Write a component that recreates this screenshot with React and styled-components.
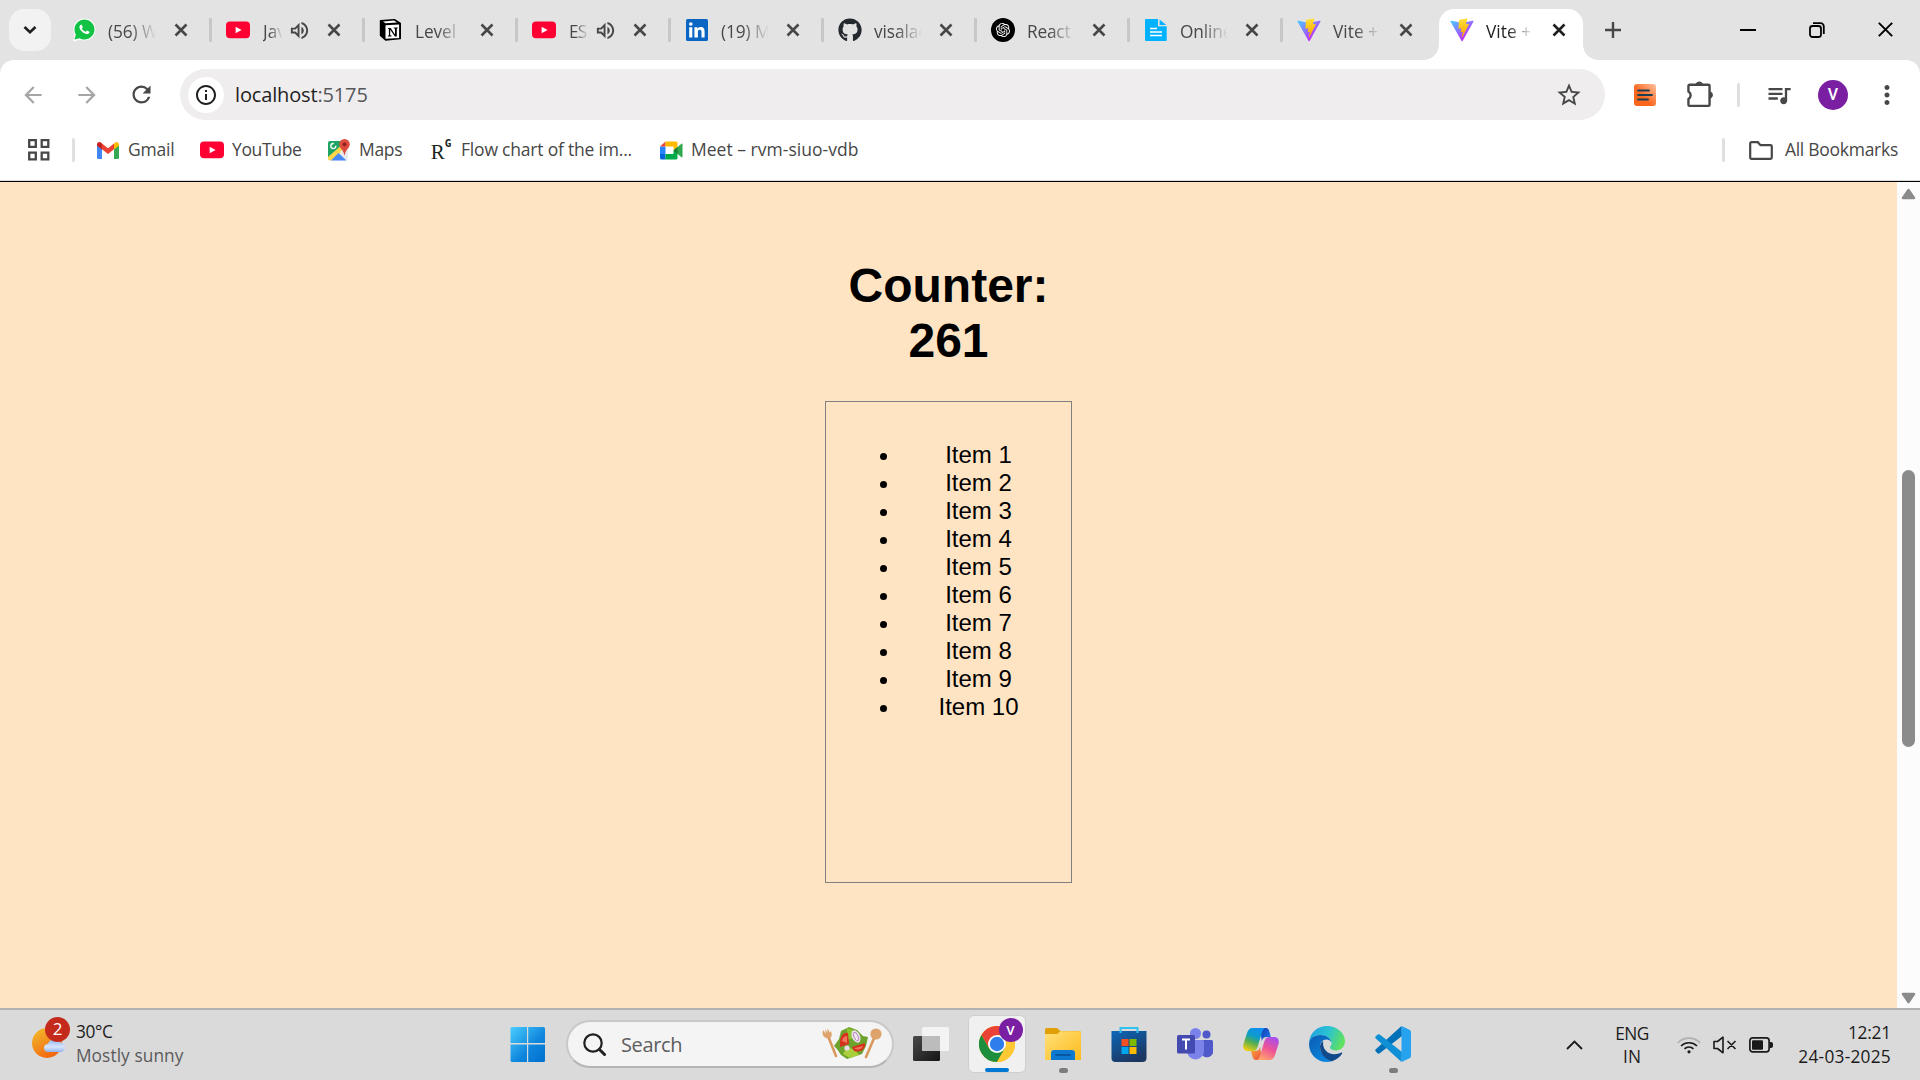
import React from "react";
import styled, { createGlobalStyle, css } from "styled-components";
import {
  MdArrowBack, MdArrowForward, MdRefresh, MdStarBorder, MdOutlineQueueMusic,
  MdOutlineVolumeUp, MdMoreVert, MdInfoOutline,
} from "react-icons/md";
import { FaGithub } from "react-icons/fa";
import { RiOpenaiFill, RiWhatsappFill } from "react-icons/ri";

const ui = `"Open Sans", "Noto Sans", sans-serif`;

const Global = createGlobalStyle`
  * { box-sizing: border-box; }
  html, body { margin: 0; padding: 0; overflow: hidden; }
  body { font-family: ${ui}; }
  svg { display: block; flex: none; }
`;

const Screen = styled.div`
  width: 1920px;
  height: 1080px;
  display: flex;
  flex-direction: column;
  overflow: hidden;
  background: #e3e3e3;
`;

/* ---------- tab strip ---------- */
const TabStrip = styled.div`
  height: 60px;
  display: flex;
  align-items: stretch;
  flex: none;
`;
const TabSearch = styled.div`
  width: 42px;
  height: 42px;
  margin: 9px 8px 0 9px;
  border-radius: 15px;
  background: #f2f2f2;
  display: grid;
  place-items: center;
`;
const tabCommon = css`
  display: flex;
  align-items: center;
  flex: none;
`;
const InactiveTab = styled.div`
  ${tabCommon}
  width: 153px;
  height: 60px;
  padding-left: 14px;
`;
const ActiveTab = styled.div`
  ${tabCommon}
  position: relative;
  width: 144px;
  height: 51px;
  margin: 9px 6px 0 3px;
  padding: 0 0 9px 11px;
  border-radius: 15px 15px 0 0;
  background: #fff;
  &::before, &::after {
    content: "";
    position: absolute;
    bottom: 0;
    width: 15px;
    height: 15px;
  }
  &::before { left: -15px; background: radial-gradient(circle at 0 0, transparent 14.5px, #fff 15px); }
  &::after { right: -15px; background: radial-gradient(circle at 100% 0, transparent 14.5px, #fff 15px); }
`;
const Favicon = styled.div`
  width: 24px;
  height: 24px;
  display: grid;
  place-items: center;
  flex: none;
`;
const TabTitle = styled.div`
  width: ${(p) => p.$w}px;
  margin-left: ${(p) => p.$ml || 12}px;
  padding-top: 3px;
  overflow: hidden;
  white-space: nowrap;
  font-size: 17.3px;
  line-height: 24px;
  letter-spacing: ${(p) => p.$ls || 0}px;
  color: ${(p) => (p.$active ? "#1f1f1f" : "#474747")};
  mask-image: linear-gradient(to right, #000 ${(p) => p.$w - (p.$w < 30 ? 14 : 26)}px, transparent ${(p) => p.$w}px);
`;
const Speaker = styled.div`
  width: 20px;
  margin-left: 6px;
  color: #474747;
`;
const TabClose = styled.div`
  width: 14px;
  margin-left: ${(p) => p.$ml}px;
`;
const TabDivider = styled.div`
  width: 3px;
  height: 24px;
  margin-left: 21px;
  background: #c7c7c7;
  border-radius: 1px;
`;
const NewTab = styled.div`
  width: 48px;
  height: 60px;
  display: grid;
  place-items: center;
`;
const WindowButtons = styled.div`
  margin-left: auto;
  display: flex;
`;
const WindowButton = styled.div`
  width: 69px;
  height: 59px;
  display: grid;
  place-items: center;
`;

/* ---------- toolbar ---------- */
const Chrome = styled.div`
  height: 122px;
  flex: none;
  background: #fff;
  border-radius: 14px 14px 0 0;
  border-bottom: 1px solid #000;
  box-shadow: inset 0 -1px 0 #dcdcdc;
`;
const Toolbar = styled.div`
  height: 60px;
  padding: 9px 6px 0;
  display: flex;
`;
const ToolCell = styled.div`
  width: 54px;
  height: 51px;
  display: grid;
  place-items: center;
  flex: none;
  color: ${(p) => p.$c || "#474747"};
`;
const Omnibox = styled.div`
  flex: 1;
  height: 51px;
  margin: 0 13px 0 12px;
  padding: 0 22px 0 8px;
  border-radius: 26px;
  background: #efedee;
  display: flex;
  align-items: center;
`;
const SiteInfo = styled.div`
  width: 36px;
  height: 36px;
  border-radius: 50%;
  background: #fff;
  display: grid;
  place-items: center;
`;
const Url = styled.div`
  flex: 1;
  margin-left: 11px;
  font-size: 20px;
  letter-spacing: ${(p) => p.$ls}px;
  line-height: 28px;
  color: #1f1f1f;
  span { color: #56575a; }
`;
const Rule = styled.div`
  width: 3px;
  height: 24px;
  border-radius: 2px;
  background: #e0e0e0;
  margin: ${(p) => p.$m || "0"};
`;
const Avatar = styled.div`
  width: ${(p) => p.$s}px;
  height: ${(p) => p.$s}px;
  border-radius: 50%;
  background: #7b1fa2;
  color: #fff;
  font: 500 ${(p) => p.$f}px Roboto, sans-serif;
  display: grid;
  place-items: center;
`;

/* ---------- bookmarks ---------- */
const Bookmarks = styled.div`
  height: 60px;
  padding: 0 22px 0 27px;
  display: flex;
  align-items: center;
`;
const Bookmark = styled.div`
  width: ${(p) => p.$w}px;
  display: flex;
  align-items: center;
  gap: 8px;
  white-space: nowrap;
`;
const Label = styled.span`
  padding-bottom: 2px;
  font-size: 17.5px;
  line-height: 24px;
  letter-spacing: ${(p) => p.$ls || 0}px;
  color: #474747;
`;
const AllBookmarks = styled.div`
  margin-left: auto;
  display: flex;
  align-items: center;
  gap: 12px;
  white-space: nowrap;
`;
const RLetter = styled.div`
  width: 24px;
  display: flex;
  justify-content: center;
  padding-top: 4px;
  font: 21px/24px "Liberation Serif", serif;
  color: #1b2623;
  span { font: 700 11px/12px "DejaVu Sans Mono", monospace; margin-top: -2px; }
`;

/* ---------- page ---------- */
const Viewport = styled.div`
  height: 826px;
  flex: none;
  display: flex;
`;
const Page = styled.div`
  flex: 1;
  background: #ffe4c4;
  display: flex;
  flex-direction: column;
  align-items: center;
  font-family: "Liberation Sans", Arial, sans-serif;
  color: #000;
`;
const Heading = styled.h1`
  width: 247px;
  margin: 76px 0 0;
  font-size: 48px;
  line-height: 55px;
  text-align: center;
`;
const ListBox = styled.div`
  width: 247px;
  height: 482px;
  margin-top: 33px;
  padding-top: 39px;
  border: 1px solid #808080;
`;
const Items = styled.ul`
  margin: 0;
  padding: 0 0 0 54px;
  list-style: none;
`;
const Item = styled.li`
  display: flex;
  align-items: center;
  height: 28px;
  font-size: 24px;
  line-height: 28px;
  &::before {
    content: "";
    width: 7px;
    height: 7px;
    margin-top: 2px;
    border-radius: 50%;
    background: #000;
  }
`;
const ItemText = styled.span`
  flex: 1;
  padding-right: 1px;
  text-align: center;
`;
const Scrollbar = styled.div`
  width: 23px;
  background: #fcfcfc;
  display: flex;
  flex-direction: column;
  align-items: center;
  padding: 6px 0 4px;
`;
const Thumb = styled.div`
  width: 13px;
  height: 277px;
  margin: 270px 0 auto;
  border-radius: 7px;
  background: #8b8b8b;
`;

/* ---------- taskbar ---------- */
const Taskbar = styled.div`
  height: 72px;
  flex: none;
  border-top: 2px solid #b2b2b2;
  background: #dadada;
  display: flex;
  align-items: stretch;
`;
const Weather = styled.div`
  width: 495px;
  padding-left: 30px;
  display: flex;
`;
const WeatherText = styled.div`
  margin-left: 6px;
  padding-top: 10px;
  font-size: 17.3px;
  line-height: 24px;
  color: #1c1c1c;
  white-space: nowrap;
`;
const Line = styled.div`
  letter-spacing: ${(p) => p.$ls || 0}px;
  color: ${(p) => p.$c || "inherit"};
`;
const TaskCell = styled.div`
  width: 66px;
  display: flex;
  flex-direction: column;
  align-items: center;
  flex: none;
  padding-top: ${(p) => p.$pt || 16}px;
`;
const RunDot = styled.div`
  width: 9px;
  height: 5px;
  margin-top: 6px;
  border-radius: 3px;
  background: #7c7c7c;
`;
const ActiveTile = styled.div`
  position: relative;
  width: 58px;
  height: 58px;
  margin-left: -1px;
  padding-top: 10px;
  border-radius: 6px;
  border: 1px solid #cfcfcf;
  background: #f0f0f0;
  display: flex;
  flex-direction: column;
  align-items: center;
`;
const ActiveBar = styled.div`
  width: 24px;
  height: 5px;
  margin-top: 6px;
  border-radius: 3px;
  background: #0078d4;
`;
const TileBadge = styled.div`
  position: absolute;
  right: 2px;
  top: 2px;
`;
const SearchPill = styled.div`
  width: 328px;
  height: 48px;
  margin: 10px 4px 0 5px;
  padding: 0 9px 0 15px;
  border: 2px solid #c9c9c9;
  border-bottom-color: #b5b5b5;
  border-radius: 24px;
  background: #f4f4f4;
  display: flex;
  align-items: center;
`;
const SearchText = styled.div`
  flex: 1;
  margin-left: 15px;
  font-size: 20px;
  letter-spacing: -0.35px;
  color: #5d5d5d;
`;
const Tray = styled.div`
  margin-left: auto;
  padding-right: 29px;
  display: flex;
  align-items: center;
  color: #1a1a1a;
`;
const TrayIcon = styled.div`
  width: 24px;
  margin-right: ${(p) => p.$mr ?? 12}px;
`;
const TrayText = styled.div`
  width: ${(p) => p.$w}px;
  margin-right: ${(p) => p.$mr || 0}px;
  font-size: 17.3px;
  line-height: ${(p) => p.$lh || 24}px;
  text-align: ${(p) => p.$align};
  white-space: nowrap;
`;

/* ---------- icons ---------- */
const Cross = ({ c = "#474747", s = 14, w = 2.6 }) => (
  <svg width={s} height={s} viewBox="0 0 14 14"><path d="M1.5 1.5l11 11M12.5 1.5l-11 11" stroke={c} strokeWidth={w} fill="none" /></svg>
);
const YouTube = () => (
  <svg width="24" height="18" viewBox="0 0 24 18"><rect y=".6" width="24" height="16.6" rx="4" fill="#ff0033" /><path d="M9.6 5.7v6.6L15.6 9z" fill="#fff" /></svg>
);
const WhatsApp = () => (
  <svg width="24" height="24" viewBox="0 0 24 24">
    <circle cx="11.500" cy="11.500" r="11" fill="#fff" /><path d="M0 23.500l2-8 6 6z" fill="#fff" />
    <RiWhatsappFill x="-.5" y="-.5" size={24} color="#12c245" />
  </svg>
);
const Notion = () => (
  <svg width="24" height="24" viewBox="0 0 24 24">
    <path d="M1.5 2.8L15.5 1.6 21.3 5.3V20.6L6.6 22 1.5 17.5z" fill="#000" stroke="#000" strokeWidth="1.4" strokeLinejoin="round" />
    <path d="M4 3.5L15 2.6 18 4.6 6.5 5.3z" fill="#fff" /><path d="M6.5 7.2L20.1 6.4V19.9L6.5 20.8z" fill="#fff" />
    <path d="M9 10h2.7l4.3 6.4v-5.7l-1.2-.4V9.6l4-.2v.8l-1 .4v7.8l-1.9.2-4.7-6.9v5.5l1.3.4v.8l-3.6.2v-.9l1-.4V10.9L9 10.7z" fill="#000" />
  </svg>
);
const LinkedIn = () => (
  <svg width="22" height="22" viewBox="0 0 22 22"><rect width="22" height="22" rx="1.5" fill="#0a66c2" /><path d="M3.2 8.3h3.1v10.2H3.2zM8.4 8.3h3v1.4c.5-.9 1.6-1.7 3.2-1.7 3.3 0 4 2.1 4 4.9v5.6h-3.1v-5c0-1.2 0-2.7-1.7-2.7s-1.9 1.3-1.9 2.6v5.1H8.4z" fill="#fff" /><circle cx="4.8" cy="5" r="1.8" fill="#fff" /></svg>
);
const OpenAI = () => (
  <svg width="24" height="24" viewBox="0 0 24 24"><circle cx="12" cy="12" r="12" fill="#000" /><RiOpenaiFill x="3.500" y="3.500" size={17} color="#fff" /></svg>
);
const Doc = () => (
  <svg width="22" height="22" viewBox="0 0 22 22"><path d="M1 0h12v7.3h8.7V21a1 1 0 0 1-1 1H1a1 1 0 0 1-1-1V1a1 1 0 0 1 1-1z" fill="#00b2ff" /><path d="M14.6.5l6.6 5.4h-6.6z" fill="#00b2ff" /><path d="M5 9.5h7M5 13h12M5 16.5h12" stroke="#fff" strokeWidth="1.6" /></svg>
);
const Vite = () => (
  <svg width="24" height="24" viewBox="0 0 410 404">
    <defs>
      <linearGradient id="va" x1="6" y1="33" x2="235" y2="344" gradientUnits="userSpaceOnUse"><stop stopColor="#41D1FF" /><stop offset="1" stopColor="#BD34FE" /></linearGradient>
      <linearGradient id="vb" x1="194.651" y1="8.818" x2="236.076" y2="292.989" gradientUnits="userSpaceOnUse"><stop stopColor="#FFEA83" /><stop offset=".083" stopColor="#FFDD35" /><stop offset="1" stopColor="#FFA800" /></linearGradient>
    </defs>
    <path d="M399.641 59.5246L215.643 388.545C211.844 395.338 202.084 395.378 198.228 388.618L10.5817 59.5563C6.38087 52.1896 12.6802 43.2665 21.0281 44.7586L205.223 77.6824C206.398 77.8924 207.601 77.8904 208.776 77.6763L389.119 44.8058C397.439 43.2894 403.768 52.1434 399.641 59.5246Z" fill="url(#va)" />
    <path d="M292.965 1.5744L156.801 28.2552C154.563 28.6937 152.906 30.5903 152.771 32.8664L144.395 174.33C144.198 177.662 147.258 180.248 150.51 179.498L188.42 170.749C191.967 169.931 195.172 173.055 194.443 176.622L183.18 231.775C182.422 235.487 185.907 238.661 189.532 237.56L212.947 230.446C216.577 229.344 220.065 232.527 219.297 236.242L201.398 322.875C200.278 328.294 207.486 331.249 210.492 326.603L212.5 323.5L323.454 102.072C325.312 98.3645 322.108 94.137 318.036 94.9228L279.014 102.454C275.347 103.161 272.227 99.746 273.262 96.1583L298.731 7.86689C299.767 4.27314 296.636 0.855181 292.965 1.5744Z" fill="url(#vb)" />
  </svg>
);
const Gmail = () => (
  <svg width="22" height="17" viewBox="0 0 22 17">
    <path d="M0 3v12.5A1.5 1.5 0 0 0 1.5 17H5V7z" fill="#4285f4" /><path d="M22 3v12.5a1.5 1.5 0 0 1-1.5 1.5H17V7z" fill="#34a853" />
    <path d="M5 1.6l6 4.6 6-4.6V7.3l-6 4.6-6-4.6z" fill="#ea4335" /><path d="M0 2.4C0 .3 2.3-.7 3.9.6L5 1.6v6L0 3.8z" fill="#c5221f" /><path d="M22 2.4C22 .3 19.700-.7 18.100.6L17 1.600v6l5-3.800z" fill="#fbbc04" />
  </svg>
);
const Maps = () => (
  <svg width="24" height="24" viewBox="0 0 24 24">
    <rect x="1" y="3" width="20" height="19.500" rx="2" fill="#e8eaed" />
    <path d="M3 3h12l1 5L2 21a2 2 0 0 1-1-1.500V5a2 2 0 0 1 2-2z" fill="#1fa463" /><path d="M1 19L17 5l3 4L4 22.500H3A2 2 0 0 1 1 20.500z" fill="#ffd54c" />
    <path d="M4 22.500L11.500 15l8 7.500z" fill="#4889f4" /><path d="M13 13.500l7 7.500V10z" fill="#e8eaed" />
    <circle cx="6.300" cy="8" r="2.500" fill="none" stroke="#fff" strokeWidth="1.300" strokeDasharray="12 3" />
    <path d="M17.500 1A5.300 5.300 0 0 0 12.200 6.300c0 4 4.300 5 5 10.700h.6c.7-5.700 5-6.700 5-10.700A5.300 5.300 0 0 0 17.500 1z" fill="#dd4b3e" /><circle cx="17.500" cy="6.300" r="1.900" fill="#8a221b" />
  </svg>
);
const Meet = () => (
  <svg width="23" height="19" viewBox="0 0 23 19">
    <path d="M0 5.500h5.500V13H0z" fill="#2684fc" /><path d="M5.500.5V5.500H0z" fill="#ea4335" /><path d="M0 13h5.500v5.500H1.500A1.500 1.500 0 0 1 0 17z" fill="#0066da" />
    <path d="M5.500.5H16A1.500 1.500 0 0 1 17.500 2V9.500l-4-1V5.500h-8z" fill="#ffba00" /><path d="M13.500 9.500h4V17a1.500 1.500 0 0 1-1.500 1.500H5.500V13h8z" fill="#00ac47" />
    <path d="M13.500 9.500L21.500 2.800c.5-.4 1-.1 1 .5v12.400c0 .6-.5.9-1 .5z" fill="#2fa84f" /><path d="M13.500 9.500l4-3.600v7.200z" fill="#188038" />
  </svg>
);
const Apps = () => (
  <svg width="24" height="24" viewBox="0 0 24 24" fill="none" stroke="#474747" strokeWidth="2.300"><path d="M2.200 2.200h6.600v6.600H2.200zM14.700 2.200h6.600v6.600h-6.600zM2.200 14.700h6.600v6.600H2.200zM14.700 14.700h6.600v6.600h-6.600z" /></svg>
);
const Puzzle = () => (
  <svg width="28" height="28" viewBox="-1 1 26 26">
    <path d="M3.200 4.500h17.600a1 1 0 0 1 1 1v17.600a1 1 0 0 1-1 1H3.200a1 1 0 0 1-1-1v-5.300a4 4 0 0 0 0-7V5.500a1 1 0 0 1 1-1z" fill="none" stroke="#474747" strokeWidth="2.200" />
    <path d="M9.500 4a2.900 2.900 0 0 1 5.600 0zM22.300 11.300a2.900 2.900 0 0 1 0 5.600z" fill="#474747" stroke="#474747" />
  </svg>
);
const ReaderExt = () => (
  <svg width="22" height="22" viewBox="0 0 22 22"><defs><linearGradient id="rx" x1="1" y1="0" x2=".4" y2=".6"><stop stopColor="#ffc2a0" /><stop offset="1" stopColor="#f9671c" /></linearGradient></defs><rect width="22" height="22" rx="3" fill="url(#rx)" /><path d="M4 6.500h11M4 11h14M4 15.500h10" stroke="#1e3f53" strokeWidth="1.800" strokeLinecap="round" /></svg>
);
const SunCloud = () => (
  <svg width="40" height="50" viewBox="0 0 40 50">
    <defs><linearGradient id="sn" x1="0" y1="0" x2=".6" y2="1"><stop stopColor="#f2c02e" /><stop offset="1" stopColor="#f2660f" /></linearGradient><linearGradient id="cl" x1="0" y1="0" x2="0" y2="1"><stop stopColor="#8fb4f0" /><stop offset=".6" stopColor="#d9e6fb" /><stop offset="1" stopColor="#8eb2ee" /></linearGradient></defs>
    <circle cx="17" cy="33" r="15" fill="url(#sn)" />
    <path d="M18 42a4 4 0 0 1 0-8 7 7 0 0 1 12.500-1.500A4.800 4.800 0 0 1 31 42z" fill="url(#cl)" />
  </svg>
);
const WeatherIcon = styled.div`
  position: relative;
  width: 40px;
`;
const Alert = styled.div`
  position: absolute;
  left: 15px;
  top: 7px;
  width: 25px;
  height: 25px;
  border-radius: 50%;
  background: #c42b1c;
  color: #fff;
  font-size: 17px;
  line-height: 24px;
  text-align: center;
`;
const Windows = () => (
  <svg width="36" height="36" viewBox="0 0 36 36"><defs><linearGradient id="wn" x1="0" y1="0" x2="35" y2="35" gradientUnits="userSpaceOnUse"><stop stopColor="#4cd0ff" /><stop offset=".6" stopColor="#0f86dd" /><stop offset="1" stopColor="#0071cf" /></linearGradient></defs><path d="M2 1h15v16H.5V2.500A1.500 1.500 0 0 1 2 1zM18.200 1h15.300A1.500 1.500 0 0 1 35 2.500V17H18.200zM.5 18.500H17V36H2A1.500 1.500 0 0 1 .5 34.500zM18.200 18.500H35v16a1.500 1.500 0 0 1-1.500 1.500H18.200z" fill="url(#wn)" /></svg>
);
const Salad = () => (
  <svg width="62" height="34" viewBox="0 0 62 34">
    <g stroke="#d9995c" strokeLinecap="round"><path d="M7 9l8 20" strokeWidth="2.600" /><path d="M54 9l-9 21" strokeWidth="2.600" /></g>
    <path d="M1.500 5l1-2 2 4V2l2 4V1.500l2.500 4 1-1.500c1.500 4 .5 8-3 7.500S1.500 9 1.500 5z" fill="#dda36b" /><circle cx="55" cy="7" r="5.600" fill="#dda36b" />
    <path d="M13 19l5-7 2-8 8-4 8 3 6 6 5 1-2 9-4 8-9 3-6 2-6-4-4-6z" fill="#6da32c" /><path d="M22 27l4-7 8 3 4 5-9 3z" fill="#a9cf3d" /><path d="M26 1l6 2 1 8-7 2z" fill="#8fc42e" />
    <path d="M19 14c1-6 4-9 8-8l1 11-9 3z" fill="#d6301f" /><path d="M31 20l13-4c1 6-4 10-11 8z" fill="#d6301f" /><path d="M21 14c1-4 3-5 5-5v7zM34 21l8-2c-1 3-4 4-8 3z" fill="#f2765a" />
    <ellipse cx="35" cy="9.500" rx="4" ry="6.500" transform="rotate(-25 35 9.500)" fill="#f0e6f2" /><ellipse cx="35" cy="9.500" rx="2" ry="4.500" transform="rotate(-25 35 9.500)" fill="none" stroke="#b286b7" /><circle cx="26" cy="21" r="2.600" fill="#eadcec" />
  </svg>
);
const TaskView = () => (
  <svg width="36" height="36" viewBox="0 0 36 36"><defs><linearGradient id="tv" x1="0" y1="0" x2="1" y2="1"><stop stopColor="#4a4a4a" /><stop offset="1" stopColor="#151515" /></linearGradient></defs><rect y="10" width="27" height="25" rx="1.500" fill="url(#tv)" /><rect x="9" y="1" width="27" height="24" rx="1.500" fill="#f3f3f3" /><path d="M9 10h18v15H10.500A1.500 1.500 0 0 1 9 23.500z" fill="#bcbcbc" /></svg>
);
const ChromeLogo = () => (
  <svg width="36" height="36" viewBox="0 0 36 36">
    <circle cx="18" cy="18" r="18" fill="#fbbc04" />
    <path d="M18 9H33.600A18 18 0 0 0 2.410 9L10.200 22.500z" fill="#ea4335" />
    <path d="M25.800 22.500L18 36A18 18 0 0 1 2.410 9L10.200 22.500z" fill="#1e8e3e" />
    <path d="M18 9h15.590A18 18 0 0 1 18 36l7.800-13.500z" fill="#fcc934" />
    <circle cx="18" cy="18" r="9" fill="#fff" /><circle cx="18" cy="18" r="7.200" fill="#2f7cec" />
  </svg>
);
const Explorer = () => (
  <svg width="36" height="36" viewBox="0 0 36 36"><defs><linearGradient id="fx" x1="0" y1="0" x2="1" y2="1"><stop stopColor="#ffe07a" /><stop offset="1" stopColor="#fdbb1c" /></linearGradient></defs>
    <path d="M0 10V3.500A1.500 1.500 0 0 1 1.500 2H12l3.500 3H34a2 2 0 0 1 2 2v5H0z" fill="#dfa007" /><path d="M0 8h12.500L15 5.200h19.500A1.500 1.500 0 0 1 36 6.700V34H0z" fill="url(#fx)" />
    <path d="M6 34V27a3 3 0 0 1 3-3h18a3 3 0 0 1 3 3v7z" fill="#0d78cf" /><path d="M11 29h14" stroke="#064b8f" strokeWidth="1.500" strokeLinecap="round" /></svg>
);
const Store = () => (
  <svg width="36" height="36" viewBox="0 0 36 36"><defs><linearGradient id="st" x1="0" y1="0" x2=".5" y2="1"><stop stopColor="#0c67b8" /><stop offset="1" stopColor="#1d3763" /></linearGradient></defs>
    <path d="M.5 5h35v27a4 4 0 0 1-4 4h-27a4 4 0 0 1-4-4z" fill="url(#st)" /><path d="M9.500 7V2h17v5" fill="none" stroke="#31c2f2" strokeWidth="2" />
    <path d="M10.500 13h7v7h-7z" fill="#f25022" /><path d="M18.500 13h7v7h-7z" fill="#7fba00" /><path d="M10.500 21h7v7h-7z" fill="#00a4ef" /><path d="M18.500 21h7v7h-7z" fill="#ffb900" /></svg>
);
const Teams = () => (
  <svg width="36" height="36" viewBox="0 0 36 36">
    <circle cx="29.500" cy="8.500" r="4" fill="#5059c9" /><circle cx="18.500" cy="7.500" r="5.500" fill="#7b83eb" />
    <path d="M24 14h10.500a1.500 1.500 0 0 1 1.500 1.500V23a6 6 0 0 1-12 4z" fill="#5059c9" /><path d="M11 14h14.500a1.500 1.500 0 0 1 1.500 1.500V25a8.500 8.500 0 0 1-17 0z" fill="#7b83eb" />
    <rect y="9" width="18" height="18.500" rx="1.500" fill="#444bb0" /><path d="M5 13.500h8M9 13.500v10" stroke="#fff" strokeWidth="2" />
  </svg>
);
const Copilot = () => (
  <svg width="36" height="36" viewBox="0 0 36 36">
    <defs>
      <linearGradient id="c1" x1=".6" y1="0" x2=".2" y2="1"><stop stopColor="#108ff0" /><stop offset=".35" stopColor="#0e9cc8" /><stop offset=".6" stopColor="#4fad55" /><stop offset="1" stopColor="#f5cf0e" /></linearGradient>
      <linearGradient id="c2" x1=".8" y1="0" x2=".3" y2="1"><stop stopColor="#a44df0" /><stop offset=".5" stopColor="#ee5296" /><stop offset="1" stopColor="#ffa66b" /></linearGradient>
      <linearGradient id="c3" x1="0" y1="0" x2="1" y2=".7"><stop stopColor="#1435a8" /><stop offset="1" stopColor="#1875e8" /></linearGradient>
      <linearGradient id="c4" x1="0" y1="0" x2="1" y2="1"><stop stopColor="#f8b33a" /><stop offset="1" stopColor="#ee473f" /></linearGradient>
    </defs>
    <path d="M17 2h5.500c3 0 3.500 2 4.300 5l1 4h-4c-3 0-4 1-5 4z" fill="url(#c3)" />
    <path d="M19 34h-5.500c-3 0-3.700-2-4.500-5l-1-4h4c3 0 4-1 5-4z" fill="url(#c4)" />
    <path d="M9.500 2H23c-2 0-3 1.500-4 4.500L14.500 21c-1 3-2.500 4-5 4H5c-4 0-5.500-3-4.500-7L4 7c1-3 2.500-5 5.500-5z" fill="url(#c1)" />
    <path d="M26.500 34H13c2 0 3-1.500 4-4.500L21.500 15c1-3 2.500-4 5-4H31c4 0 5.500 3 4.500 7L32 29c-1 3-2.500 5-5.500 5z" fill="url(#c2)" />
  </svg>
);
const Edge = () => (
  <svg width="36" height="36" viewBox="0 0 36 36">
    <defs>
      <linearGradient id="e1" x1="0" y1=".2" x2="1" y2=".5"><stop stopColor="#1d9ee0" /><stop offset=".5" stopColor="#2bc3d2" /><stop offset="1" stopColor="#62e25c" /></linearGradient>
      <linearGradient id="e2" x1="0" y1="0" x2=".7" y2="1"><stop stopColor="#0a5cb0" /><stop offset="1" stopColor="#0b87e0" /></linearGradient>
    </defs>
    <path d="M.2 16C1 6.500 8.500 0 18 0c10.500 0 18 7.500 18 15 0 5.500-4 9.500-9 9.500-4 0-6-1.500-6-3s1.600-2 1.600-4.500C22.600 13 18 9 11.500 9 6 9 2 12 .2 16z" fill="url(#e1)" />
    <path d="M0 18C.3 12.500 5 9 11.500 9c6 0 10.500 3.500 11 7.500-1-2-3-3-5-3-4 0-6.500 3-6.500 7.500C11 28 17 33.500 23.500 35 12 39 0 30.500 0 18z" fill="url(#e2)" />
    <path d="M14.200 15c-2 1.300-3.200 3.300-3.200 6 0 7 5.700 13 12 14.300 5-1.500 8-4.500 10-7.500.6-.9-.2-1.500-1-1-1.800.9-4 1.400-6.500 1.400C18.500 28.200 13 23 14.200 15z" fill="#114a8b" />
  </svg>
);
const VSCode = () => (
  <svg width="36" height="36" viewBox="0 0 36 36">
    <path d="M26.500 0L.8 23.200a1.600 1.600 0 0 0 0 2.300l1.700 1.700a1.700 1.700 0 0 0 2.200 0L27 10z" fill="#0070b8" />
    <path d="M26.500 36L.8 12.600a1.600 1.600 0 0 1 0-2.300l1.700-1.600a1.700 1.700 0 0 1 2.200-.1L27 26z" fill="#0f8fd6" />
    <path d="M26.500 0l8 3.700A2.500 2.500 0 0 1 36 6v24a2.500 2.500 0 0 1-1.500 2.300L26.500 36z" fill="#27a2ee" />
  </svg>
);

const tabs = [
  { icon: <WhatsApp />, title: "(56) W", ls: -0.1, ml: 11 },
  { icon: <YouTube />, title: "Jav", audio: true },
  { icon: <Notion />, title: "Level S", ls: -0.1 },
  { icon: <YouTube />, title: "ES", audio: true, ls: -0.8 },
  { icon: <LinkedIn />, title: "(19) M", ls: -0.1 },
  { icon: <FaGithub size={24} color="#24292f" />, title: "visalac", ls: -0.1 },
  { icon: <OpenAI />, title: "React", ls: -0.2 },
  { icon: <Doc />, title: "Online", ls: -0.1 },
  { icon: <Vite />, title: "Vite +", ls: 0.05 },
];
const items = Array.from({ length: 10 }, (_, i) => `Item ${i + 1}`);

export default function App() {
  return (
    <Screen>
      <Global />
      <TabStrip>
        <TabSearch><svg width="14" height="10" viewBox="0 0 14 10"><path d="M1.500 2l5.500 5.300L12.500 2" fill="none" stroke="#1f1f1f" strokeWidth="2.600" /></svg></TabSearch>
        {tabs.map((t, i) => (
          <InactiveTab key={i}>
            <Favicon>{t.icon}</Favicon>
            <TabTitle $w={t.audio ? 20 : 48} $ml={t.audio ? 13 : t.ml || 12} $ls={t.ls}>{t.title}</TabTitle>
            {t.audio && <Speaker><MdOutlineVolumeUp size={23} /></Speaker>}
            <TabClose $ml={t.audio ? 19 : 30 - (t.ml || 12)}><Cross /></TabClose>
            {i < 8 && <TabDivider />}
          </InactiveTab>
        ))}
        <ActiveTab>
          <Favicon><Vite /></Favicon>
          <TabTitle $w={48} $ls={0.05} $active>Vite +</TabTitle>
          <TabClose $ml={18}><Cross c="#1f1f1f" /></TabClose>
        </ActiveTab>
        <NewTab><svg width="16" height="16" viewBox="0 0 16 16"><path d="M8 0v16M0 8h16" stroke="#474747" strokeWidth="2.400" /></svg></NewTab>
        <WindowButtons>
          <WindowButton><svg width="16" height="2"><rect width="16" height="2" /></svg></WindowButton>
          <WindowButton><svg width="16" height="16" viewBox="0 0 16 16" fill="none" stroke="#000" strokeWidth="1.800"><rect x="1" y="4" width="11" height="11" rx="2.500" /><path d="M4 1.200h7.500a3.300 3.300 0 0 1 3.300 3.300V12" /></svg></WindowButton>
          <WindowButton><Cross c="#000" s={17} w={1.600} /></WindowButton>
        </WindowButtons>
      </TabStrip>

      <Chrome>
        <Toolbar>
          <ToolCell $c="#a5a5a5"><MdArrowBack size={26} /></ToolCell>
          <ToolCell $c="#a5a5a5"><MdArrowForward size={26} /></ToolCell>
          <ToolCell><MdRefresh size={27} /></ToolCell>
          <Omnibox>
            <SiteInfo><MdInfoOutline size={24} color="#1f1f1f" /></SiteInfo>
            <Url $ls={-0.15}>localhost<span>:5175</span></Url>
            <MdStarBorder size={28} color="#474747" />
          </Omnibox>
          <ToolCell><ReaderExt /></ToolCell>
          <ToolCell><Puzzle /></ToolCell>
          <Rule $m="14px 12px 0 11px" />
          <ToolCell><MdOutlineQueueMusic size={28} /></ToolCell>
          <ToolCell><Avatar $s={30} $f={16}>V</Avatar></ToolCell>
          <ToolCell><MdMoreVert size={30} /></ToolCell>
        </Toolbar>
        <Bookmarks>
          <Apps />
          <Rule $m="0 21px" />
          <Bookmark $w={104}><Favicon><Gmail /></Favicon><Label $ls={-0.2}>Gmail</Label></Bookmark>
          <Bookmark $w={127}><Favicon><YouTube /></Favicon><Label $ls={-0.35}>YouTube</Label></Bookmark>
          <Bookmark $w={102}><Favicon><Maps /></Favicon><Label $ls={-0.3}>Maps</Label></Bookmark>
          <Bookmark $w={230}><RLetter>R<span>G</span></RLetter><Label $ls={-0.2}>Flow chart of the im...</Label></Bookmark>
          <Bookmark $w={220}><Favicon><Meet /></Favicon><Label $ls={0.02}>Meet – rvm-siuo-vdb</Label></Bookmark>
          <AllBookmarks>
            <Rule $m="0 12px 0 0" />
            <svg width="24" height="19" viewBox="0 0 24 19"><path d="M2.500 1.200h6.300l2.700 3h10a1.300 1.300 0 0 1 1.300 1.300v11a1.300 1.300 0 0 1-1.300 1.300h-19a1.300 1.300 0 0 1-1.300-1.300V2.500a1.300 1.300 0 0 1 1.300-1.300z" fill="none" stroke="#474747" strokeWidth="2.200" /></svg>
            <Label $ls={-0.27}>All Bookmarks</Label>
          </AllBookmarks>
        </Bookmarks>
      </Chrome>

      <Viewport>
        <Page>
          <Heading>Counter: 261</Heading>
          <ListBox>
            <Items>{items.map((t) => <Item key={t}><ItemText>{t}</ItemText></Item>)}</Items>
          </ListBox>
        </Page>
        <Scrollbar>
          <svg width="15" height="12" viewBox="0 0 15 12"><path d="M7.500 2L13 10H2z" fill="#8b8b8b" stroke="#8b8b8b" strokeWidth="2.500" strokeLinejoin="round" /></svg>
          <Thumb />
          <svg width="15" height="12" viewBox="0 0 15 12"><path d="M7.500 10L13 2H2z" fill="#8b8b8b" stroke="#8b8b8b" strokeWidth="2.500" strokeLinejoin="round" /></svg>
        </Scrollbar>
      </Viewport>

      <Taskbar>
        <Weather>
          <WeatherIcon><SunCloud /><Alert>2</Alert></WeatherIcon>
          <WeatherText><Line $ls={-0.4}>30°C</Line><Line $c="#5a5a5a" $ls={0.08}>Mostly sunny</Line></WeatherText>
        </Weather>
        <TaskCell><Windows /></TaskCell>
        <SearchPill>
          <svg width="23" height="23" viewBox="0 0 23 23" fill="none" stroke="#202020" strokeLinecap="round"><circle cx="10" cy="10" r="8.700" strokeWidth="2.200" /><path d="M16.500 16.500l5 5" strokeWidth="3" /></svg>
          <SearchText>Search</SearchText>
          <Salad />
        </SearchPill>
        <TaskCell><TaskView /></TaskCell>
        <TaskCell $pt={5}>
          <ActiveTile><ChromeLogo /><ActiveBar /><TileBadge><Avatar $s={24} $f={13}>V</Avatar></TileBadge></ActiveTile>
        </TaskCell>
        <TaskCell><Explorer /><RunDot /></TaskCell>
        <TaskCell><Store /></TaskCell>
        <TaskCell><Teams /></TaskCell>
        <TaskCell><Copilot /></TaskCell>
        <TaskCell><Edge /></TaskCell>
        <TaskCell><VSCode /><RunDot /></TaskCell>
        <Tray>
          <TrayIcon $mr={22}><svg width="17" height="10" viewBox="0 0 17 10"><path d="M1 9l7.500-7.500L16 9" fill="none" stroke="#1a1a1a" strokeWidth="1.800" /></svg></TrayIcon>
          <TrayText $w={40} $mr={25} $align="center" $lh={23}><Line $ls={-0.5}>ENG</Line><Line>IN</Line></TrayText>
          <TrayIcon><svg width="24" height="18" viewBox="0 0 24 18" fill="none" stroke="#1a1a1a" strokeWidth="1.700"><path d="M.8 7a15.500 15.500 0 0 1 22.400 0" stroke="#b0b0b0" /><path d="M4 10a11.500 11.500 0 0 1 16 0M7.500 12.800a6.500 6.500 0 0 1 9 0" /><circle cx="12" cy="15.800" r="1.600" fill="#1a1a1a" stroke="none" /></svg></TrayIcon>
          <TrayIcon><svg width="24" height="18" viewBox="0 0 24 18" fill="none" stroke="#1a1a1a" strokeWidth="1.600"><path d="M1 5.500h3.500L10 1.200v15.600L4.500 12.500H1zM14.500 5l8 8M22.500 5l-8 8" strokeLinejoin="round" /></svg></TrayIcon>
          <TrayIcon $mr={24}><svg width="24" height="16" viewBox="0 0 24 16"><rect x=".9" y=".9" width="19.200" height="14" rx="2.800" fill="none" stroke="#1a1a1a" strokeWidth="1.700" /><rect x="3" y="3.200" width="11" height="9.500" rx="1" fill="#1a1a1a" /><path d="M21 5h1a2 2 0 0 1 2 2v2a2 2 0 0 1-2 2h-1z" fill="#1a1a1a" /></svg></TrayIcon>
          <TrayText $w={94} $align="right"><Line $ls={-0.2}>12:21</Line><Line $ls={0.25}>24-03-2025</Line></TrayText>
        </Tray>
      </Taskbar>
    </Screen>
  );
}
